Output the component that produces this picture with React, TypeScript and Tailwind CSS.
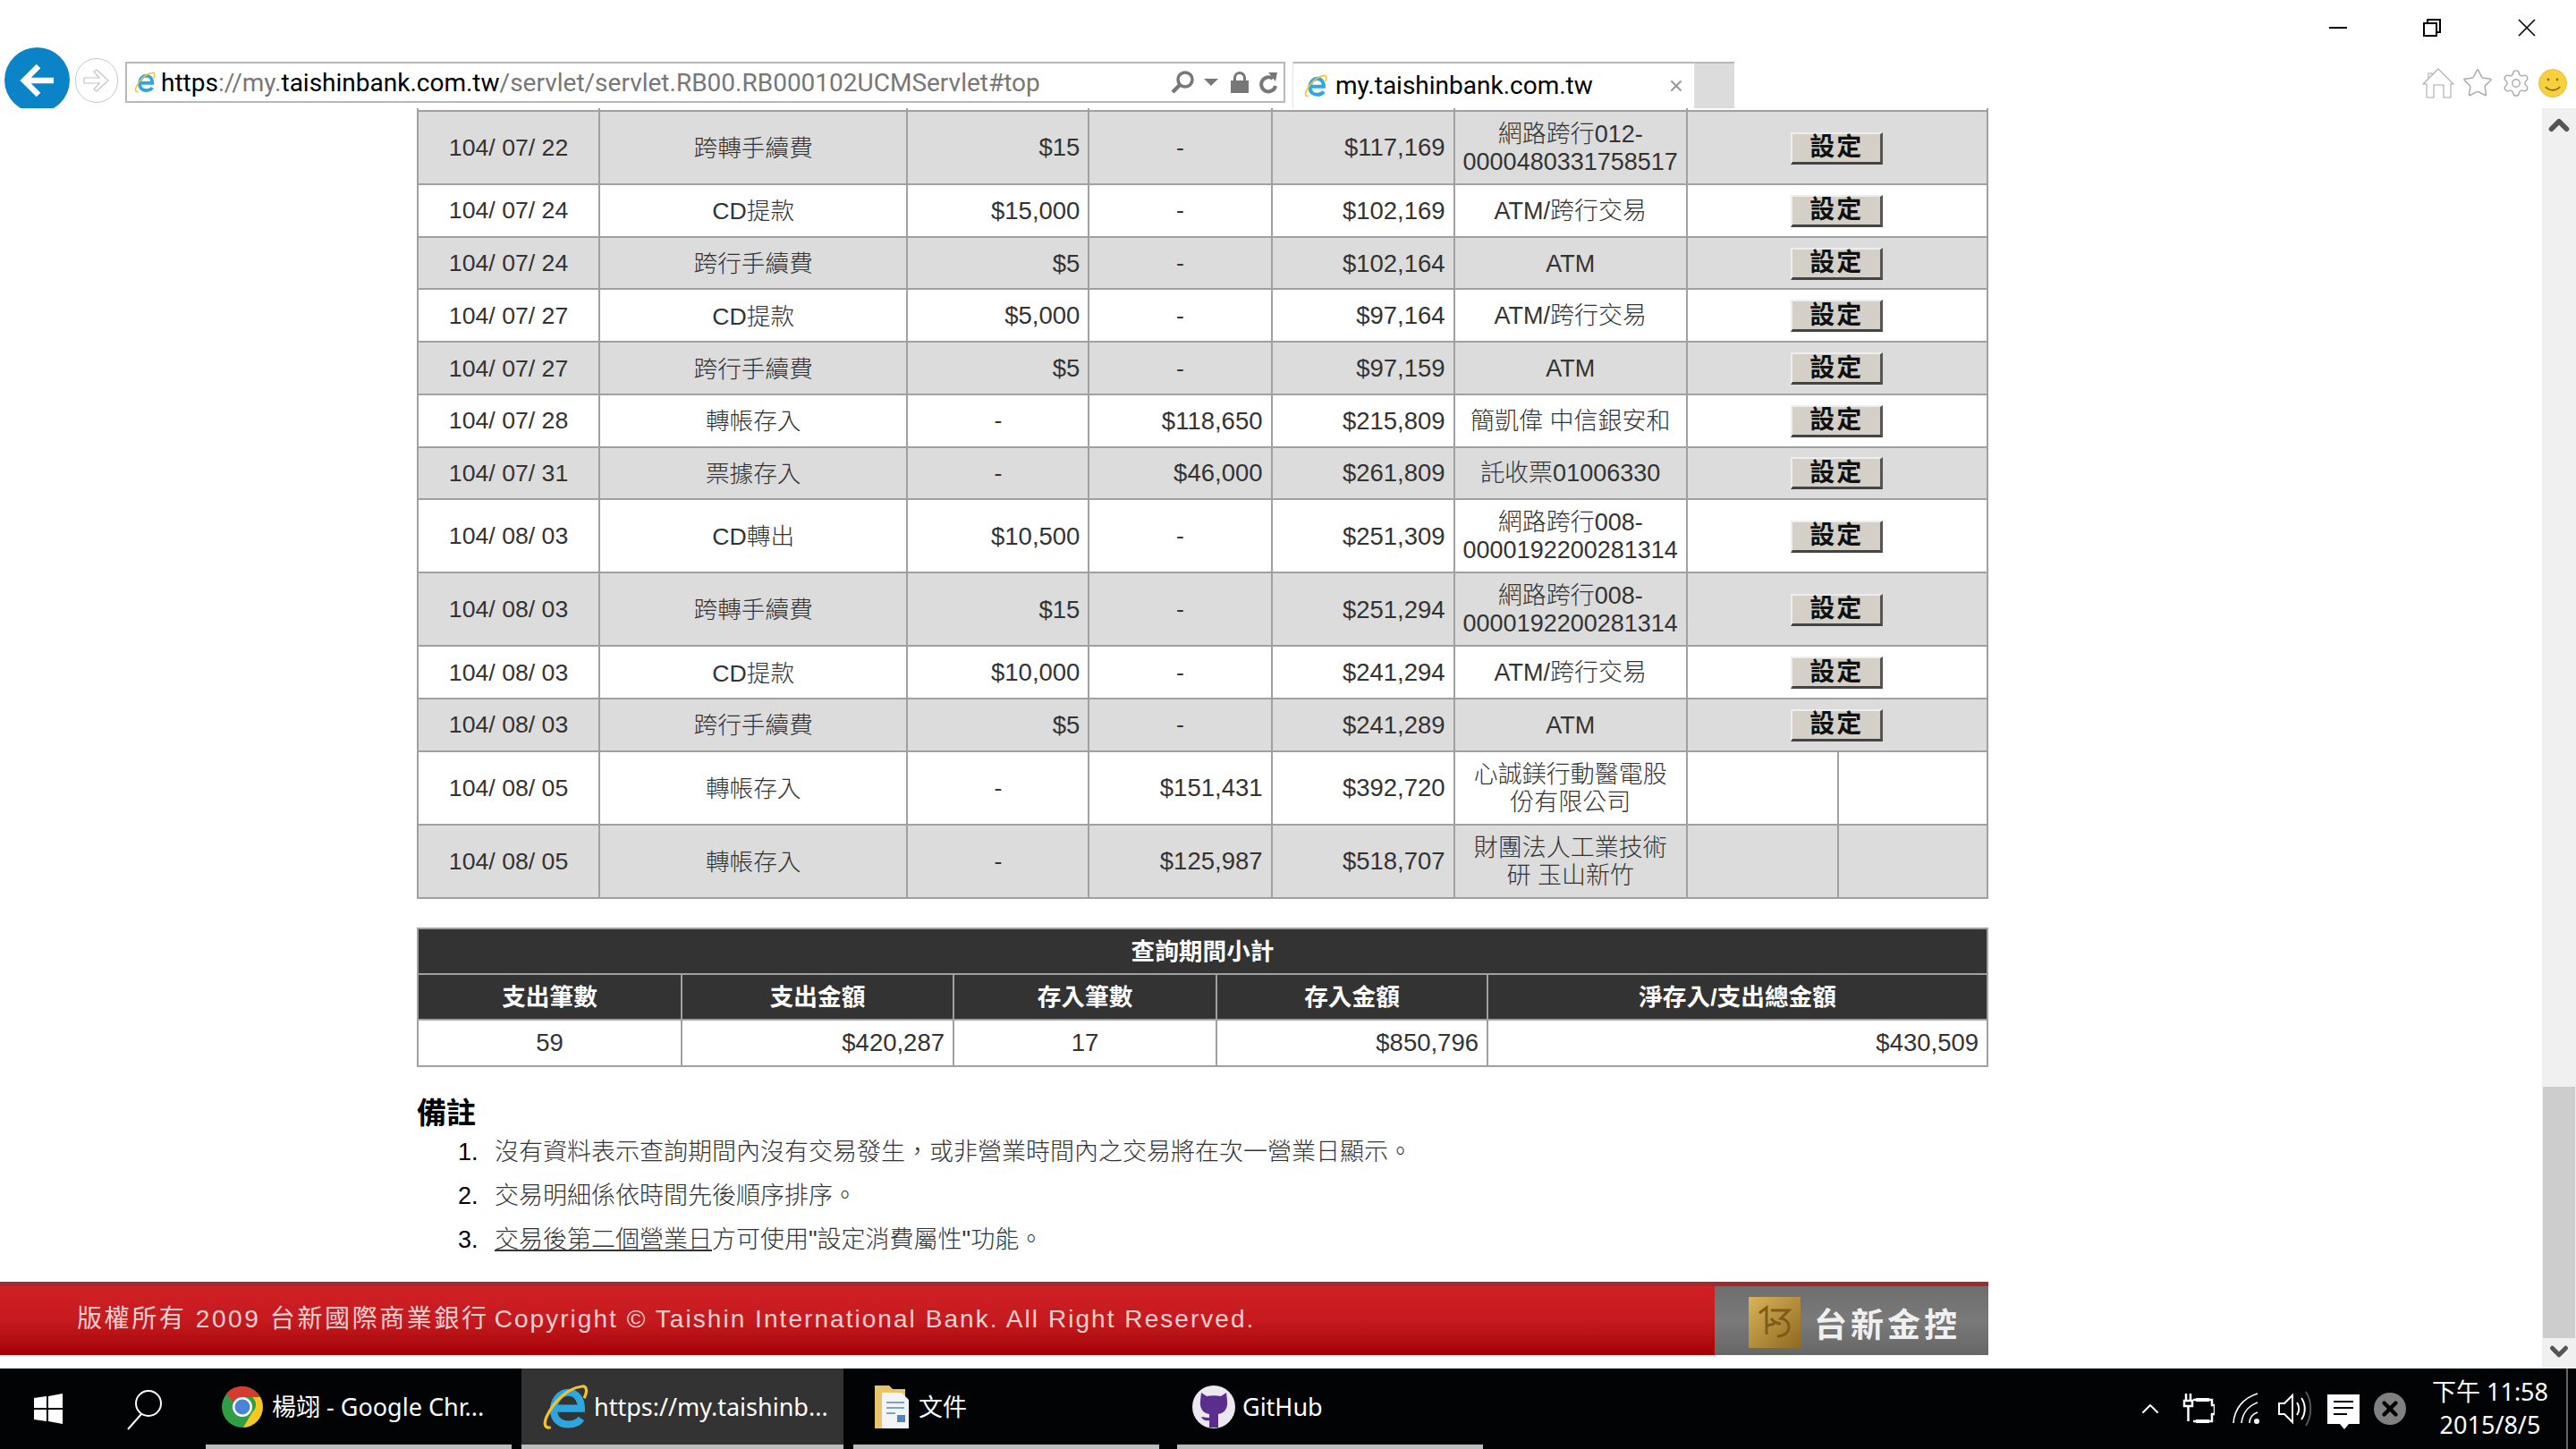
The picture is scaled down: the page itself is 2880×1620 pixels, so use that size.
import { Fragment } from "react"
import { X, Star, Settings, ChevronUp, ChevronDown } from "lucide-react"

type Row = {
    date: string
    type: string
    out: string
    income: string
    balance: string
    note: string
    button?: boolean
}

const rows: Row[] = [
    { date: "104/ 07/ 22", type: "跨轉手續費", out: "$15", income: "-", balance: "$117,169", note: "網路跨行012-\n0000480331758517", button: true },
    { date: "104/ 07/ 24", type: "CD提款", out: "$15,000", income: "-", balance: "$102,169", note: "ATM/跨行交易", button: true },
    { date: "104/ 07/ 24", type: "跨行手續費", out: "$5", income: "-", balance: "$102,164", note: "ATM", button: true },
    { date: "104/ 07/ 27", type: "CD提款", out: "$5,000", income: "-", balance: "$97,164", note: "ATM/跨行交易", button: true },
    { date: "104/ 07/ 27", type: "跨行手續費", out: "$5", income: "-", balance: "$97,159", note: "ATM", button: true },
    { date: "104/ 07/ 28", type: "轉帳存入", out: "-", income: "$118,650", balance: "$215,809", note: "簡凱偉 中信銀安和", button: true },
    { date: "104/ 07/ 31", type: "票據存入", out: "-", income: "$46,000", balance: "$261,809", note: "託收票01006330", button: true },
    { date: "104/ 08/ 03", type: "CD轉出", out: "$10,500", income: "-", balance: "$251,309", note: "網路跨行008-\n0000192200281314", button: true },
    { date: "104/ 08/ 03", type: "跨轉手續費", out: "$15", income: "-", balance: "$251,294", note: "網路跨行008-\n0000192200281314", button: true },
    { date: "104/ 08/ 03", type: "CD提款", out: "$10,000", income: "-", balance: "$241,294", note: "ATM/跨行交易", button: true },
    { date: "104/ 08/ 03", type: "跨行手續費", out: "$5", income: "-", balance: "$241,289", note: "ATM", button: true },
    { date: "104/ 08/ 05", type: "轉帳存入", out: "-", income: "$151,431", balance: "$392,720", note: "心誠鎂行動醫電股\n份有限公司" },
    { date: "104/ 08/ 05", type: "轉帳存入", out: "-", income: "$125,987", balance: "$518,707", note: "財團法人工業技術\n研 玉山新竹" },
]

const font = "font-['Liberation_Sans','Noto_Sans_CJK_TC',sans-serif]"
const uiFont = "font-['Noto_Sans','Noto_Sans_CJK_TC',sans-serif]"

const cell = "border-2 border-[#a0a0a0] p-0 align-middle"
const amount = "pr-[9px] text-right text-[27.5px]"
const stub = "border-x-2 border-b-2 border-[#a0a0a0] p-0"

const BankRow = ({ row, index }: { row: Row; index: number }) => {
    const isLong = row.note.includes("\n")
    return (
        <tr className={`${isLong ? "h-[82.1px]" : "h-[58.7px]"} ${index % 2 === 0 ? "bg-[#dcdcdc]" : "bg-white"}`}>
            <td className={`${cell} text-center`}>{row.date}</td>
            <td className={`${cell} pt-[2px] text-center`}>{row.type}</td>
            <td className={`${cell} ${row.out === "-" ? "text-center" : amount}`}>{row.out}</td>
            <td className={`${cell} ${row.income === "-" ? "text-center" : amount}`}>{row.income}</td>
            <td className={`${cell} ${amount}`}>{row.balance}</td>
            <td className={`${cell} whitespace-pre-line pt-[2px] text-center text-[27px] leading-[31px]`}>{row.note}</td>
            {row.button ? (
                <td colSpan={2} className={`${cell} text-center`}>
                    <button className="inline-flex h-[36px] w-[103px] items-center justify-center border-2 border-r-[3px] border-b-[3px] border-t-[#eee] border-l-[#eee] border-r-[#555] border-b-[#444] bg-[#d4d0c8] text-[28px] font-bold tracking-[2px] text-[#111]">
                        設定
                    </button>
                </td>
            ) : (
                <Fragment>
                    <td className={cell}></td>
                    <td className={cell}></td>
                </Fragment>
            )}
        </tr>
    )
}

const IEIcon = ({ size }: { size: number }) => (
    <svg width={size} height={size} viewBox="0 0 32 32" className="shrink-0">
        <path d="M10 17h17c0-7-4-11-9-11S8 11 8 18s5 10 10 10c4 0 7-1 9-4" fill="none" stroke="#2ea7e0" strokeWidth="5" />
        <path d="M27 2C18 3 8 12 3 23c-2 5-1 8 3 7M27 2c3-1 5 2 2 8" fill="none" stroke="#f2c230" strokeWidth="2" />
    </svg>
)

const ChromeIcon = () => (
    <svg width="48" height="48" viewBox="0 0 48 48" className="shrink-0">
        <circle cx="24" cy="24" r="23" fill="#2f9e44" />
        <path d="M24 1a23 23 0 0 1 20 12H24a11 11 0 0 0-10 6L6 9A23 23 0 0 1 24 1z" fill="#d93a2e" />
        <path d="M44 13a23 23 0 0 1-19 34l10-17a11 11 0 0 0 0-17z" fill="#f7c81e" />
        <circle cx="24" cy="24" r="11" fill="#fff" />
        <circle cx="24" cy="24" r="8.5" fill="#4a84d6" />
    </svg>
)

const GithubIcon = () => (
    <svg width="48" height="48" viewBox="0 0 48 48" className="shrink-0">
        <circle cx="24" cy="24" r="24" fill="#ece8f2" />
        <path d="M10 8l6 4c5-1 11-1 16 0l6-4 1 9c1 7-2 14-10 15v15h-10V39c-4 1-7 0-9-4 3 0 4 1 9 1v-4C11 31 8 24 9 17z" fill="#5b2d8e" />
    </svg>
)

const FolderIcon = () => (
    <svg width="38" height="48" viewBox="0 0 38 48" className="shrink-0">
        <path d="M0 0h16l4 4h14v44H0z" fill="#e8c46a" />
        <path d="M8 8h22l8 8v32H8z" fill="#f2f4f7" />
        <path d="M13 19h20M13 25h20M13 31h10" stroke="#7da3c8" strokeWidth="2" />
        <rect x="25" y="33" width="9" height="8" fill="#4c85b8" />
    </svg>
)

const SummaryHead = ({ children, span }: { children: string; span?: number }) => (
    <th colSpan={span} className="border-2 border-[#a0a0a0] bg-[#333] p-0 pt-[2px] text-center text-[26.67px] font-bold text-white">
        {children}
    </th>
)

const TaskItem = ({ icon, label, width, pad, active }: { icon: React.ReactNode; label: string; width: string; pad: string; active?: boolean }) => (
    <div className={`flex h-full flex-col ${width} ${active ? "bg-[#333]" : ""}`}>
        <div className={`flex flex-1 items-center text-[27px] text-white ${pad}`}>
            {icon}
            <span className="mt-[2px] whitespace-nowrap">{label}</span>
        </div>
        <div className="h-[5px] bg-[#bdbdbd]"></div>
    </div>
)

export default function App() {
    return (
        <div className={`flex h-[1620px] w-[2880px] flex-col overflow-hidden bg-white ${uiFont}`}>
            {/* browser chrome */}
            <header className="h-[121px] shrink-0 overflow-hidden">
                <div className="flex h-[53px] items-start justify-end pt-[21px] text-black">
                    <div className="mr-[85px] mt-[9px] h-[2px] w-[20px] bg-black"></div>
                    <svg width="20" height="20" viewBox="0 0 20 20" className="mr-[86px]" fill="none" stroke="#000" strokeWidth="2">
                        <rect x="1" y="5" width="14" height="14" />
                        <path d="M5 5V1h14v14h-4" />
                    </svg>
                    <svg width="20" height="20" viewBox="0 0 20 20" className="mr-[45px]" stroke="#000" strokeWidth="1.6">
                        <path d="M1 1l18 18M19 1L1 19" />
                    </svg>
                </div>
                <div className="flex h-[68px] items-start pl-[5px]">
                    <div className="flex h-[73px] w-[73px] shrink-0 items-center justify-center rounded-full bg-[#0a84c6]">
                        <svg width="40" height="40" viewBox="0 0 40 40" fill="none" stroke="#fff" strokeWidth="6.5">
                            <path d="M38 20H6M21 4L5 20l16 16" />
                        </svg>
                    </div>
                    <div className="ml-[6px] mt-[12px] flex h-[50px] w-[48px] shrink-0 items-center justify-center rounded-full border border-[#c8c8c8]">
                        <svg width="30" height="26" viewBox="0 0 30 26" fill="none" stroke="#c4c4c4" strokeWidth="1.2">
                            <path d="M1 10h17l-6-7 3-2 13 12-13 12-3-2 6-7H1z" />
                        </svg>
                    </div>
                    <div className="ml-[8px] mt-[16px] flex h-[46px] w-[1297px] shrink-0 items-center border-2 border-[#b8b8b8] pl-[8px] pr-[6px] font-['Roboto',sans-serif] text-[28px]">
                        <IEIcon size={24} />
                        <span className="ml-[6px] mt-[2px] whitespace-nowrap text-[#777]">
                            <span className="text-black">https</span>://my.<span className="text-black">taishinbank.com.tw</span>/servlet/servlet.RB00.RB000102UCMServlet#top
                        </span>
                        <div className="ml-auto flex items-center">
                            <svg width="26" height="26" viewBox="0 0 26 26" fill="none" stroke="#777" strokeWidth="3.5">
                                <circle cx="16" cy="10" r="8" />
                                <path d="M10 16L2 24" strokeWidth="4.5" />
                            </svg>
                            <svg width="16" height="8" viewBox="0 0 16 8" fill="#777" className="ml-[11px]">
                                <path d="M0 0h16L8 8z" />
                            </svg>
                            <svg width="20" height="24" viewBox="0 0 20 24" fill="#777" className="ml-[14px]">
                                <path d="M0 10h20v14H0z" />
                                <path d="M4.5 11V7a5.5 5.5 0 0 1 11 0v4" fill="none" stroke="#777" strokeWidth="3" />
                            </svg>
                            <svg width="21" height="26" viewBox="0 0 21 26" fill="none" stroke="#777" strokeWidth="4" className="ml-[12px]">
                                <path d="M15 9a8 8 0 1 0 3 8" />
                                <path d="M10 2l10 0-2 10z" fill="#777" stroke="none" />
                            </svg>
                        </div>
                    </div>
                    <div className="ml-[8px] mt-[16px] flex h-[52px] w-[450px] shrink-0 items-center border-x border-t-2 border-x-[#e4e4e4] border-t-[#b8b8b8] pl-[12px] pr-[10px] font-['Roboto',sans-serif] text-[28px] text-black">
                        <IEIcon size={26} />
                        <span className="ml-[9px] whitespace-nowrap">my.taishinbank.com.tw</span>
                        <X size={20} strokeWidth={2.5} color="#999" className="ml-auto" />
                    </div>
                    <div className="mt-[16px] h-[52px] w-[44px] shrink-0 border-t-2 border-t-[#b8b8b8] bg-[#dcdcdc]"></div>
                    <div className="ml-auto mt-[22px] flex items-center gap-[8px] pr-[10px] text-[#aaa]">
                        <svg width="36" height="34" viewBox="0 0 36 34" fill="none" stroke="#aaa" strokeWidth="1.1">
                            <path d="M1 18L18 1l17 17-3 0v15H24V19H13v14H5V18zM7 12V6h4v2" />
                        </svg>
                        <Star size={36} strokeWidth={1} />
                        <Settings size={34} strokeWidth={1} />
                        <svg width="32" height="32" viewBox="0 0 32 32">
                            <circle cx="16" cy="16" r="15.5" fill="#f8cf3c" stroke="#c9a938" strokeWidth="0.6" />
                            <circle cx="11" cy="12" r="1.4" fill="#8a6d16" />
                            <circle cx="21" cy="12" r="1.4" fill="#8a6d16" />
                            <path d="M8 20c4 5 12 5 16 0" fill="none" stroke="#8a6d16" strokeWidth="2" />
                        </svg>
                    </div>
                </div>
            </header>

            {/* page and scrollbar */}
            <div className="flex min-h-0 flex-1">
                <main className={`min-w-0 flex-1 overflow-hidden text-[26.67px] font-light text-[#333] ${font}`}>
                    <div className="ml-[466px] w-[1757px]">
                        <table className="w-full table-fixed border-collapse">
                            <colgroup>
                                <col className="w-[203px]" />
                                <col className="w-[344px]" />
                                <col className="w-[203px]" />
                                <col className="w-[204px]" />
                                <col className="w-[204px]" />
                                <col className="w-[260px]" />
                                <col className="w-[169px]" />
                                <col className="w-[167px]" />
                            </colgroup>
                            <tbody>
                                <tr className="h-[3px] text-[0px]">
                                    <td className={stub}></td>
                                    <td className={stub}></td>
                                    <td className={stub}></td>
                                    <td className={stub}></td>
                                    <td className={stub}></td>
                                    <td className={stub}></td>
                                    <td colSpan={2} className={stub}></td>
                                </tr>
                                {rows.map((row, index) => (
                                    <BankRow key={index} row={row} index={index} />
                                ))}
                            </tbody>
                        </table>

                        <table className="mt-[32px] w-full table-fixed border-collapse">
                            <colgroup>
                                <col className="w-[295px]" />
                                <col className="w-[304px]" />
                                <col className="w-[294px]" />
                                <col className="w-[303px]" />
                                <col className="w-[559px]" />
                            </colgroup>
                            <tbody>
                                <tr className="h-[51px]">
                                    <SummaryHead span={5}>查詢期間小計</SummaryHead>
                                </tr>
                                <tr className="h-[51px]">
                                    <SummaryHead>支出筆數</SummaryHead>
                                    <SummaryHead>支出金額</SummaryHead>
                                    <SummaryHead>存入筆數</SummaryHead>
                                    <SummaryHead>存入金額</SummaryHead>
                                    <SummaryHead>淨存入/支出總金額</SummaryHead>
                                </tr>
                                <tr className="h-[52px]">
                                    <td className={`${cell} text-center text-[27.5px]`}>59</td>
                                    <td className={`${cell} ${amount}`}>$420,287</td>
                                    <td className={`${cell} text-center text-[27.5px]`}>17</td>
                                    <td className={`${cell} ${amount}`}>$850,796</td>
                                    <td className={`${cell} ${amount}`}>$430,509</td>
                                </tr>
                            </tbody>
                        </table>

                        <h2 className="mt-[33px] text-[33px] leading-[38px] font-bold text-black">備註</h2>
                        <ol className="list-none text-[27px]">
                            {[
                                <>沒有資料表示查詢期間內沒有交易發生，或非營業時間內之交易將在次一營業日顯示。</>,
                                <>交易明細係依時間先後順序排序。</>,
                                <>
                                    <span className="underline">交易後第二個營業日</span>方可使用"設定消費屬性"功能。
                                </>,
                            ].map((note, index) => (
                                <li key={index} className="flex h-[49px] items-center">
                                    <span className="w-[87px] pl-[46px] text-black">{index + 1}.</span>
                                    <span>{note}</span>
                                </li>
                            ))}
                        </ol>
                    </div>

                    <footer className="mt-[22px] flex h-[82px] w-[2223px] border-t-[5px] border-t-[#a52a2e] font-normal">
                        <div className="flex flex-1 items-center bg-gradient-to-b from-[#d02025] via-[#c51a1f] to-[#a30005] pb-[2px] pl-[86px] text-[28px] tracking-[2.6px] whitespace-nowrap text-[#f6cfcf]">
                            版權所有 2009 台新國際商業銀行 <span className="ml-[6px] tracking-[2.05px]">Copyright © Taishin International Bank. All Right Reserved.</span>
                        </div>
                        <div className="flex w-[306px] items-center bg-gradient-to-b from-[#6e6e6e] via-[#7a7a7a] to-[#666] pl-[38px]">
                            <div className="mt-[4px] flex h-[57px] w-[58px] shrink-0 items-center justify-center bg-gradient-to-br from-[#d9b45a] to-[#8f6a1f]">
                                <svg width="40" height="40" viewBox="0 0 40 40" fill="none" stroke="#7d5c1a" strokeWidth="3">
                                    <path d="M3 10l8-6v30M16 7h20l-9 9c6 1 9 5 9 10 0 6-6 10-13 10M16 16c3 4 7 6 11 6M12 24l8-2" />
                                </svg>
                            </div>
                            <span className="ml-[15px] mt-[12px] text-[37px] leading-none font-bold tracking-[4px] whitespace-nowrap text-[#f0f0f0]">台新金控</span>
                        </div>
                    </footer>
                </main>

                <aside className="flex w-[38px] shrink-0 flex-col bg-[#f0f0f0] text-[#555]">
                    <ChevronUp size={34} strokeWidth={4} className="mx-auto mt-[2px]" />
                    <div className="mx-[1px] mt-auto h-[281px] bg-[#cdcdcd]"></div>
                    <ChevronDown size={30} strokeWidth={4} className="mx-auto mb-[4px]" />
                </aside>
            </div>

            {/* taskbar */}
            <div className="flex h-[90px] shrink-0 items-stretch bg-[#020305]">
                <div className="flex w-[230px] shrink-0 items-center">
                    <svg width="32" height="34" viewBox="0 0 32 34" fill="#fff" className="ml-[38px]">
                        <path d="M0 5l14-2v13H0zM16 3l16-3v16H16zM0 18h14v13L0 29zM16 18h16v16l-16-3z" />
                    </svg>
                    <svg width="44" height="48" viewBox="0 0 44 48" fill="none" stroke="#fff" strokeWidth="2" className="ml-[70px]">
                        <circle cx="26" cy="18" r="14" />
                        <path d="M18 30L3 47" />
                    </svg>
                </div>
                <TaskItem icon={<ChromeIcon />} label="楊翊 - Google Chr..." width="w-[342px]" pad="gap-[9px] pl-[17px]" />
                <div className="w-[11px]"></div>
                <TaskItem icon={<IEIcon size={52} />} label="https://my.taishinb..." width="w-[360px]" pad="gap-[6px] pl-[23px]" active />
                <div className="w-[11px]"></div>
                <TaskItem icon={<FolderIcon />} label="文件" width="w-[342px]" pad="gap-[11px] pl-[24px]" />
                <div className="w-[20px]"></div>
                <TaskItem icon={<GithubIcon />} label="GitHub" width="w-[342px]" pad="gap-[8px] pl-[17px]" />
                <div className="ml-auto flex items-center pr-[9px] text-white">
                    <ChevronUp size={32} strokeWidth={1.5} />
                    <svg width="36" height="36" viewBox="0 0 36 36" fill="none" stroke="#fff" strokeWidth="2.5" className="ml-[20px]">
                        <path d="M4 1v8M9 1v8M2 9h9v6H2zM6.5 15v17M12 8h21v6h3v10h-3v8H12" />
                        <path d="M15 8h15M15 32h15" strokeWidth="4" />
                    </svg>
                    <svg width="32" height="36" viewBox="0 0 32 36" fill="none" stroke="#fff" strokeWidth="1.6" className="ml-[20px]">
                        <path d="M1 34C2 18 12 6 28 1M10 34C11 24 17 15 28 11M19 34c0-5 3-10 9-12" />
                        <circle cx="27" cy="32" r="3" fill="#fff" stroke="none" />
                    </svg>
                    <svg width="40" height="44" viewBox="0 0 40 44" fill="none" stroke="#fff" strokeWidth="2" className="ml-[18px]">
                        <path d="M2 16h6l9-9v30l-9-9H2zM22 15c3 4 3 10 0 14M27 10c5 7 5 17 0 24" />
                        <path d="M32 3c7 11 7 27 0 38" stroke="#555" />
                    </svg>
                    <div className="relative ml-[16px] flex h-[33px] w-[36px] flex-col gap-[5px] bg-white px-[7px] py-[7px]">
                        <div className="h-[2px] bg-black"></div>
                        <div className="h-[2px] bg-black"></div>
                        <div className="h-[2px] w-[15px] bg-black"></div>
                        <div className="absolute -bottom-[6px] left-[14px] h-0 w-0 border-x-[5px] border-t-[6px] border-x-transparent border-t-white"></div>
                    </div>
                    <div className="ml-[16px] flex h-[36px] w-[36px] items-center justify-center rounded-full bg-[#808080]">
                        <X size={26} strokeWidth={4} color="#000" />
                    </div>
                    <div className="ml-[27px] flex w-[134px] flex-col items-center pb-[3px] text-[27px] leading-[37px] text-white">
                        <span className="whitespace-nowrap">下午 11:58</span>
                        <span className="whitespace-nowrap">2015/8/5</span>
                    </div>
                    <div className="ml-[18px] h-[90px] w-[2px] bg-[#666]"></div>
                </div>
            </div>
        </div>
    )
}
